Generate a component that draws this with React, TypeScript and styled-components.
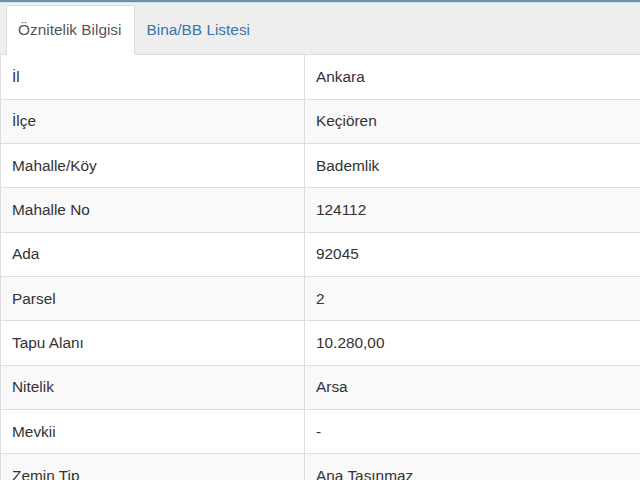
import React from "react";
import styled, { createGlobalStyle } from "styled-components";

const GlobalStyle = createGlobalStyle`
  body {
    margin: 0;
    background: #fff;
    font-family: "Liberation Sans", Arial, sans-serif;
    color: #333;
  }
`;

const Panel = styled.div`
  width: 640px;
  height: 480px;
  overflow: hidden;
  border-top: 2px solid #6f8ea8;
`;

const TabBar = styled.div`
  display: flex;
  align-items: flex-end;
  height: 53px;
  padding: 0 0 0 6px;
  background-color: #eee;
  border-top: 1px solid #cfe3ef;
  border-bottom: 1px solid #ddd;
  box-sizing: border-box;
`;

const Tab = styled.div<{ $active?: boolean }>`
  display: flex;
  align-items: center;
  height: 50px;
  margin-bottom: -1px;
  padding: 0 12px 0 11px;
  font-size: 15.4px;
  box-sizing: border-box;
  color: ${(p) => (p.$active ? "#555" : "#3a74a8")};
  background-color: ${(p) => (p.$active ? "#fff" : "transparent")};
  border: 1px solid ${(p) => (p.$active ? "#ddd" : "transparent")};
  border-bottom-color: ${(p) => (p.$active ? "#fff" : "transparent")};
`;

const Table = styled.table`
  width: 100%;
  border-collapse: collapse;
  font-size: 15.4px;
`;

const Row = styled.tr<{ $striped?: boolean }>`
  background-color: ${(p) => (p.$striped ? "#f9f9f9" : "#fff")};
`;

const Cell = styled.td<{ $first?: boolean }>`
  height: 44.33px;
  padding: 0 11px;
  box-sizing: border-box;
  vertical-align: middle;
  border-bottom: 1px solid #ddd;
  border-left: 1px solid #ddd;
  width: ${(p) => (p.$first ? "304px" : "auto")};
`;

const rows: [string, string][] = [
  ["İl", "Ankara"],
  ["İlçe", "Keçiören"],
  ["Mahalle/Köy", "Bademlik"],
  ["Mahalle No", "124112"],
  ["Ada", "92045"],
  ["Parsel", "2"],
  ["Tapu Alanı", "10.280,00"],
  ["Nitelik", "Arsa"],
  ["Mevkii", "-"],
  ["Zemin Tip", "Ana Taşınmaz"],
  ["Kat", "-"],
];

const App: React.FC = () => {
  return (
    <>
      <GlobalStyle />
      <Panel>
        <TabBar>
          <Tab $active>Öznitelik Bilgisi</Tab>
          <Tab>Bina/BB Listesi</Tab>
        </TabBar>
        <Table>
          <tbody>
            {rows.map(([label, value], i) => (
              <Row key={label} $striped={i % 2 === 1}>
                <Cell $first>{label}</Cell>
                <Cell>{value}</Cell>
              </Row>
            ))}
          </tbody>
        </Table>
      </Panel>
    </>
  );
};

export default App;
